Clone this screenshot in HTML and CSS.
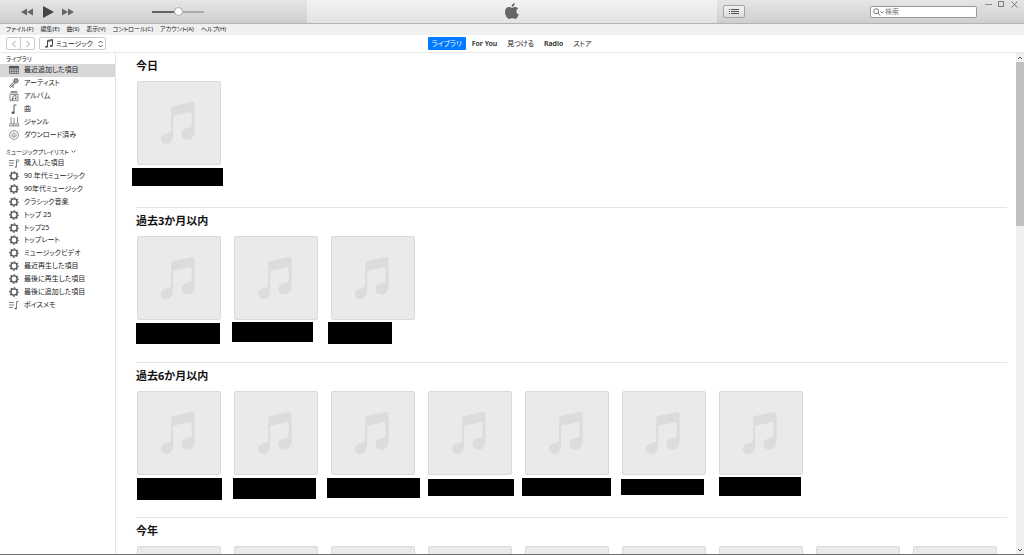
FILE: index.html
```html
<!DOCTYPE html>
<html lang="ja">
<head>
<meta charset="utf-8">
<title>ミュージック</title>
<link rel="stylesheet" href="styles.css">
</head>
<body>
<svg class="defs" aria-hidden="true">
  <symbol id="note" viewBox="0 0 84 84"><path fill="#dcdcdc" d="M34 27q0-2 2-2.500L55 20.500q3-.600 3 2V50c0 6-3 9-7 9s-6.500-2-6.500-5.500c0-4 3-6 6.500-6.500 3-.400 4-1 4-3V32.500q0-2-2-1.500l-15 3q-2 .400-2 2.500V54c0 6-3 9.500-7 9.500S23.500 61 23.500 58s2.500-5 6-5.500c3.500-.500 4.500-1.500 4.500-4z"/></symbol>
  <symbol id="gear" viewBox="0 0 12 12"><circle cx="6" cy="6" r="3.100" fill="none" stroke="#555" stroke-width="1.400"/><circle cx="6" cy="6" r="4.200" fill="none" stroke="#555" stroke-width="1.200" stroke-dasharray="1.649 1.649" stroke-dashoffset=".825"/></symbol>
  <symbol id="list-note" viewBox="0 0 12 12"><path d="M1 3.500h5M1 6h5M1 8.500h4M8.500 9.500V2.500h2" fill="none" stroke="#777" stroke-width=".9"/><circle cx="7.700" cy="9.500" r="1.100" fill="#666"/></symbol>
  <symbol id="purchased" viewBox="0 0 12 12"><path d="M1 3.500h5M1 6h5M1 8.500h4M8.500 10V3" fill="none" stroke="#777" stroke-width=".9"/><circle cx="9.500" cy="3.800" r="1.300" fill="none" stroke="#777" stroke-width=".8"/><circle cx="7.900" cy="9.700" r="1" fill="#777"/></symbol>
</svg>
<div class="app">
  <header class="toolbar">
    <div class="playback">
      <button class="plain" aria-label="前へ"><svg width="12" height="8" viewBox="0 0 12 8"><path fill="#666" d="M6 .5v7L0 4zM12 .5v7L6 4z"/></svg></button>
      <button class="plain play" aria-label="再生"><svg width="11" height="12" viewBox="0 0 11 12"><path fill="#444" d="M0 0l11 6L0 12z"/></svg></button>
      <button class="plain" aria-label="次へ"><svg width="12" height="8" viewBox="0 0 12 8"><path fill="#666" d="M0 .5v7L6 4zM6 .5v7L12 4z"/></svg></button>
      <input class="volume" type="range" min="0" max="100" value="50" aria-label="音量">
    </div>
    <div class="display"><svg width="14" height="17" viewBox="0 0 14 17"><path fill="#666" d="M9.700 0c.2 1.900-1.100 3.700-3 3.800C6.500 2 8 .3 9.700 0zM7 4.800c.7 0 1.700-.8 3.100-.8 1.200 0 2.300.6 3 1.600-2.500 1.500-2.100 5 .6 6-.5 1.500-1.900 4.300-3.400 4.400-1.200 0-1.600-.7-3-.7s-1.900.7-3 .7C2.300 16 0 12.300 0 9c0-3.300 2-5 4-5 1.300 0 2.300.8 3 .8z"/></svg></div>
    <div class="tools">
      <button class="list-button" aria-label="次はこちら"><svg width="10" height="7" viewBox="0 0 10 7"><path stroke="#555" d="M0 1.500h1M2 1.500h8M0 3.500h1M2 3.500h8M0 5.500h1M2 5.500h8"/></svg></button>
      <label class="search"><svg width="11" height="8" viewBox="0 0 11 8"><circle cx="3.200" cy="3.200" r="2.500" fill="none" stroke="#777"/><path d="M5 5l2 2.500M7.500 3.500l1.500 1.500 1.500-1.500" fill="none" stroke="#777"/></svg><input type="search" placeholder="検索" aria-label="検索"></label>
      <div class="window-controls">
        <button class="plain" aria-label="最小化"><svg width="7" height="7"><path stroke="#888" d="M0 3.500h7"/></svg></button>
        <button class="plain" aria-label="最大化"><svg width="7" height="7"><path fill="none" stroke="#777" d="M.5 .5h5v5h-5z"/></svg></button>
        <button class="plain" aria-label="閉じる"><svg width="7" height="7"><path stroke="#777" d="M.5 .5l6 6M6.500 .5l-6 6"/></svg></button>
      </div>
    </div>
  </header>
  <nav class="menubar" aria-label="メニュー">
    <button>ファイル(F)</button><button>編集(E)</button><button>曲(S)</button><button>表示(V)</button><button>コントロール(C)</button><button>アカウント(A)</button><button>ヘルプ(H)</button>
  </nav>
  <div class="navbar">
    <div class="nav-left">
      <div class="history">
        <button aria-label="戻る"><svg width="4" height="8"><path d="M3.500 1L.5 4l3 3" fill="none" stroke="#999"/></svg></button>
        <button aria-label="進む"><svg width="4" height="8"><path d="M.5 1l3 3-3 3" fill="none" stroke="#999"/></svg></button>
      </div>
      <label class="media">
        <svg width="8" height="9" viewBox="0 0 8 9"><path d="M2.500 7.500V1.500l5-1v6M2.500 2.500l5-1" fill="none" stroke="#444"/><ellipse cx="1.500" cy="7.700" rx="1.400" ry="1" fill="#444"/><ellipse cx="6.300" cy="6.900" rx="1.400" ry="1" fill="#444"/></svg>
        <select aria-label="メディア"><option>ミュージック</option></select>
        <svg width="5" height="8"><path d="M.5 3l2-2 2 2M.5 5l2 2 2-2" fill="none" stroke="#555"/></svg>
      </label>
    </div>
    <nav class="tabs" aria-label="表示">
      <a class="current" href="#library">ライブラリ</a><a class="latin" href="#foryou">For You</a><a href="#browse">見つける</a><a class="latin" href="#radio">Radio</a><a href="#store">ストア</a>
    </nav>
  </div>
  <div class="body">
    <aside class="sidebar">
      <h3>ライブラリ</h3>
      <ul class="library">
        <li><a class="selected" href="#recent"><svg viewBox="0 0 12 12"><path fill="none" stroke="#666" stroke-width=".8" d="M1.500 2.500h9v7h-9zM1.500 5h9M1.500 7.300h9M3.800 4v5.500M6 4v5.500M8.300 4v5.500"/><path fill="#555" d="M1 2h10v2H1z"/></svg>最近追加した項目</a></li>
        <li><a href="#artists"><svg viewBox="0 0 12 12"><circle cx="8" cy="3.800" r="2.300" fill="#999" stroke="#555" stroke-width=".7"/><path d="M6 4.500L1.500 9.500l1 .7L7.500 6M5 7.500v3.500" fill="none" stroke="#555" stroke-width=".9"/></svg>アーティスト</a></li>
        <li><a href="#albums"><svg viewBox="0 0 12 12"><path fill="none" stroke="#666" stroke-width=".8" d="M3 1.500h6M2.300 2.800h7.400M2 4.300h8v6.400H2zM5 9V6l3-.500V8.500"/><circle cx="4.500" cy="9" r=".9" fill="#555"/><circle cx="7.500" cy="8.600" r=".9" fill="#555"/></svg>アルバム</a></li>
        <li><a href="#songs"><svg viewBox="0 0 12 12"><path d="M6 9.500V2h2.500" fill="none" stroke="#555"/><ellipse cx="5" cy="9.700" rx="1.500" ry="1.200" fill="#555"/></svg>曲</a></li>
        <li><a href="#genres"><svg viewBox="0 0 12 12"><path d="M3 1v6M6 2v5M9.500 1v6M1.300 10l1.200-3h1.200l.8 3zM5 10l.6-3h1l1 3zM8.500 10l.6-3h1l1 3z" fill="none" stroke="#777" stroke-width=".8"/></svg>ジャンル</a></li>
        <li><a href="#downloaded"><svg viewBox="0 0 12 12"><circle cx="6" cy="6" r="4.400" fill="none" stroke="#777" stroke-width=".8"/><path d="M4 4.500v3M8 4.500v3M6 3v5M4.500 7L6 8.700 7.500 7" fill="none" stroke="#777" stroke-width=".8"/></svg>ダウンロード済み</a></li>
      </ul>
      <h3 class="playlists-title">ミュージックプレイリスト <svg width="5" height="4"><path d="M.5 .5l2 2 2-2" fill="none" stroke="#777"/></svg></h3>
      <ul class="playlists">
        <li><a href="#p1"><svg><use href="#purchased"/></svg>購入した項目</a></li>
        <li><a href="#p2"><svg><use href="#gear"/></svg>90 年代ミュージック</a></li>
        <li><a href="#p3"><svg><use href="#gear"/></svg>90年代ミュージック</a></li>
        <li><a href="#p4"><svg><use href="#gear"/></svg>クラシック音楽</a></li>
        <li><a href="#p5"><svg><use href="#gear"/></svg>トップ 25</a></li>
        <li><a href="#p6"><svg><use href="#gear"/></svg>トップ25</a></li>
        <li><a href="#p7"><svg><use href="#gear"/></svg>トップレート</a></li>
        <li><a href="#p8"><svg><use href="#gear"/></svg>ミュージックビデオ</a></li>
        <li><a href="#p9"><svg><use href="#gear"/></svg>最近再生した項目</a></li>
        <li><a href="#p10"><svg><use href="#gear"/></svg>最後に再生した項目</a></li>
        <li><a href="#p11"><svg><use href="#gear"/></svg>最後に追加した項目</a></li>
        <li><a href="#p12"><svg><use href="#list-note"/></svg>ボイスメモ</a></li>
      </ul>
    </aside>
    <main class="content">
      <section>
        <h2>今日</h2>
        <div class="albums">
          <div class="album"><svg class="art"><use href="#note"/></svg><div class="mask m1"></div></div>
        </div>
      </section>
      <section>
        <h2>過去3か月以内</h2>
        <div class="albums">
          <div class="album"><svg class="art"><use href="#note"/></svg><div class="mask m2"></div></div>
          <div class="album"><svg class="art"><use href="#note"/></svg><div class="mask m3"></div></div>
          <div class="album"><svg class="art"><use href="#note"/></svg><div class="mask m4"></div></div>
        </div>
      </section>
      <section>
        <h2>過去6か月以内</h2>
        <div class="albums">
          <div class="album"><svg class="art"><use href="#note"/></svg><div class="mask m5"></div></div>
          <div class="album"><svg class="art"><use href="#note"/></svg><div class="mask m6"></div></div>
          <div class="album"><svg class="art"><use href="#note"/></svg><div class="mask m7"></div></div>
          <div class="album"><svg class="art"><use href="#note"/></svg><div class="mask m8"></div></div>
          <div class="album"><svg class="art"><use href="#note"/></svg><div class="mask m9"></div></div>
          <div class="album"><svg class="art"><use href="#note"/></svg><div class="mask m10"></div></div>
          <div class="album"><svg class="art"><use href="#note"/></svg><div class="mask m11"></div></div>
        </div>
      </section>
      <section>
        <h2>今年</h2>
        <div class="albums">
          <div class="album"><svg class="art"><use href="#note"/></svg></div>
          <div class="album"><svg class="art"><use href="#note"/></svg></div>
          <div class="album"><svg class="art"><use href="#note"/></svg></div>
          <div class="album"><svg class="art"><use href="#note"/></svg></div>
          <div class="album"><svg class="art"><use href="#note"/></svg></div>
          <div class="album"><svg class="art"><use href="#note"/></svg></div>
          <div class="album"><svg class="art"><use href="#note"/></svg></div>
          <div class="album"><svg class="art"><use href="#note"/></svg></div>
          <div class="album"><svg class="art"><use href="#note"/></svg></div>
        </div>
      </section>
    </main>
    <div class="scrollbar">
      <svg width="8" height="9"><path d="M2 6l2-2 2 2" fill="none" stroke="#555"/></svg>
      <div class="track"><div class="thumb"></div></div>
      <svg width="8" height="9"><path d="M2 4l2 2 2-2" fill="none" stroke="#555"/></svg>
    </div>
  </div>
</div>
</body>
</html>
```
FILE: styles.css
```css
* { box-sizing: border-box; }
body {
  margin: 0;
  color: #222;
  background: #fff;
  font: 7px/10px "Noto Sans", "Noto Sans CJK JP", sans-serif;
  font-feature-settings: "palt";
}
button, input, select { font: inherit; color: inherit; font-feature-settings: inherit; }
svg { display: block; flex: none; }
a { color: inherit; text-decoration: none; }
h2, h3, ul { margin: 0; padding: 0; }
.defs { position: absolute; width: 0; height: 0; }
.plain { border: 0; padding: 0; background: none; }

.app {
  display: flex;
  flex-direction: column;
  height: 100vh;
  overflow: hidden;
  border-bottom: 1px solid #6e6e6e;
}

.toolbar {
  display: grid;
  grid-template-columns: 3fr 4fr 3fr;
  flex: none;
  height: 24px;
  background: linear-gradient(#e6e6e6, #cecece);
  border-bottom: 1px solid #b4b4b4;
}
.playback { display: flex; align-items: center; padding-left: 21px; }
.play { margin: 0 8px 0 10px; }
.volume {
  appearance: none;
  width: 52px;
  height: 10px;
  margin: 0 0 0 78px;
  background: linear-gradient(90deg, #666 50%, #aaa 50%) center / 100% 2px no-repeat;
}
.volume::-webkit-slider-thumb {
  appearance: none;
  width: 9px;
  height: 9px;
  border: 1px solid #aaa;
  border-radius: 50%;
  background: #fff;
}
.display {
  display: flex;
  align-items: center;
  justify-content: center;
  background: linear-gradient(#f3f3f3, #e2e2e2);
}
.tools { display: flex; align-items: flex-start; padding: 5px 6px 0 6px; }
.list-button {
  display: flex;
  align-items: center;
  justify-content: center;
  width: 22px;
  height: 13px;
  padding: 0;
  border: 1px solid #a5a5a5;
  border-radius: 2px;
  background: linear-gradient(#f2f2f2, #dcdcdc);
}
.search {
  display: flex;
  align-items: center;
  gap: 1px;
  width: 107px;
  height: 12px;
  margin: 1px 8px 0 auto;
  padding-left: 2px;
  border: 1px solid #999;
  border-radius: 2px;
  background: #fff;
}
.search input {
  flex: 1;
  min-width: 0;
  height: 10px;
  padding: 0;
  border: 0;
  outline: 0;
  background: none;
}
.search input::placeholder { color: #777; opacity: 1; }
.window-controls { display: flex; gap: 6px; margin-top: -4px; }

.menubar {
  display: flex;
  align-items: flex-start;
  flex: none;
  gap: 7px;
  height: 11px;
  padding-left: 6px;
  background: #f0f0f0;
  font-size: 6px;
}
.menubar button { padding: 0; border: 0; background: none; white-space: nowrap; }

.navbar {
  display: grid;
  grid-template-columns: 1fr auto 1fr;
  align-items: center;
  flex: none;
  height: 18px;
  padding: 0 6px;
  border-bottom: 1px solid #e8e8e8;
}
.nav-left { display: flex; gap: 4px; }
.history { display: flex; border: 1px solid #ccc; border-radius: 2px; }
.history button {
  display: flex;
  align-items: center;
  justify-content: center;
  width: 13px;
  height: 11px;
  padding: 0;
  border: 0;
  background: none;
}
.history button + button { width: 14px; border-left: 1px solid #ccc; }
.media {
  display: flex;
  align-items: center;
  gap: 3px;
  width: 67px;
  height: 13px;
  padding: 0 2px 0 5px;
  border: 1px solid #ccc;
  border-radius: 2px;
}
.media select { flex: 1; min-width: 0; appearance: none; padding: 0; border: 0; background: none; }
.tabs { display: flex; }
.tabs a { padding: 0 5px; line-height: 13px; font-weight: 400; white-space: nowrap; }
.tabs .latin { font-weight: 600; }
.tabs .current { margin-right: 1px; padding: 0 4px; border-radius: 1px; color: #fff; background: #007aff; }

.body { display: flex; flex: 1; min-height: 0; }
.sidebar { flex: none; width: 116px; border-right: 1px solid #e4e4e4; overflow: hidden; }
.sidebar h3 {
  display: flex;
  align-items: center;
  gap: 2px;
  height: 11px;
  padding-left: 6px;
  font-size: 6px;
  font-weight: 400;
  white-space: nowrap;
}
.sidebar .playlists-title { margin-top: 5px; }
.sidebar ul { display: grid; list-style: none; }
.sidebar .library { min-height: 77px; }
.sidebar .playlists { min-height: 154px; }
.sidebar li { display: grid; }
.sidebar li a { display: flex; align-items: center; gap: 4px; padding-left: 8px; white-space: nowrap; }
.sidebar li svg { width: 12px; height: 12px; }
.sidebar .selected { background: #d8d8d8; }

.content { flex: 1; min-width: 0; padding: 0 9px 0 20px; overflow: hidden; }
section { padding: 5px 0 42px; border-bottom: 1px solid #e4e4e4; }
h2 { margin-bottom: 7px; color: #111; font-size: 11px; font-weight: 700; line-height: 16px; }
.albums { display: grid; grid-template-columns: repeat(auto-fill, 84px); gap: 13px; padding-left: 1px; }
.album { position: relative; }
.art { width: 84px; height: 84px; border: 1px solid #dadada; border-radius: 2px; background: #eaeaea; }

/* Covers laid over the album captions */
.mask { position: absolute; top: 87px; left: -1px; width: 84px; height: 21px; background: #000; }
.m1 { left: -5px; width: 91px; height: 18px; }
.m3 { left: -2px; top: 86px; width: 81px; height: 20px; }
.m4 { left: -3px; top: 86px; width: 64px; height: 22px; }
.m5 { left: 0; width: 85px; height: 22px; }
.m6 { left: -1px; width: 83px; }
.m7 { left: -4px; width: 93px; height: 20px; }
.m8 { left: 0; top: 88px; width: 86px; height: 17px; }
.m9 { left: -3px; width: 89px; height: 18px; }
.m10 { left: -1px; top: 88px; width: 83px; height: 16px; }
.m11 { left: 0; top: 86px; width: 82px; height: 19px; }

.scrollbar { display: flex; flex-direction: column; flex: none; width: 8px; background: #f0f0f0; }
.track { flex: 1; }
.thumb { height: 34%; background: #c0c0c0; }
```
